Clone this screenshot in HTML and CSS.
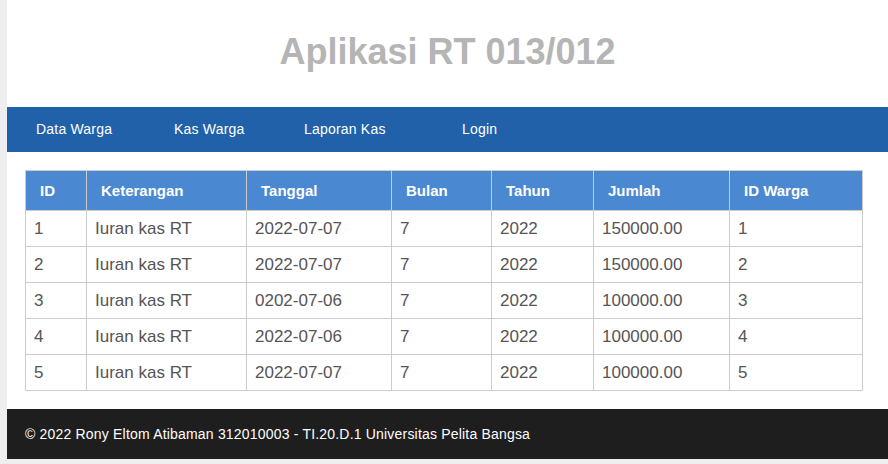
FILE: index.html
```html
<!DOCTYPE html>
<html lang="id">
<head>
<meta charset="utf-8">
<title>Aplikasi RT 013/012</title>
<link rel="stylesheet" href="styles.css">
</head>
<body>
<div class="page">
  <header class="site-header">
    <h1 class="site-title">Aplikasi RT 013/012</h1>
  </header>
  <nav class="main-nav">
    <ul class="nav-list">
      <li class="nav-item nav-data"><a href="#">Data Warga</a></li>
      <li class="nav-item nav-kas"><a href="#">Kas Warga</a></li>
      <li class="nav-item nav-laporan"><a href="#">Laporan Kas</a></li>
      <li class="nav-item nav-login"><a href="#">Login</a></li>
    </ul>
  </nav>
  <main class="content">
    <table class="kas-table">
      <colgroup>
        <col class="c-id">
        <col class="c-ket">
        <col class="c-tgl">
        <col class="c-bln">
        <col class="c-thn">
        <col class="c-jml">
        <col class="c-wrg">
      </colgroup>
      <thead>
        <tr><th>ID</th><th>Keterangan</th><th>Tanggal</th><th>Bulan</th><th>Tahun</th><th>Jumlah</th><th>ID Warga</th></tr>
      </thead>
      <tbody>
        <tr><td>1</td><td>Iuran kas RT</td><td>2022-07-07</td><td>7</td><td>2022</td><td>150000.00</td><td>1</td></tr>
        <tr><td>2</td><td>Iuran kas RT</td><td>2022-07-07</td><td>7</td><td>2022</td><td>150000.00</td><td>2</td></tr>
        <tr><td>3</td><td>Iuran kas RT</td><td>0202-07-06</td><td>7</td><td>2022</td><td>100000.00</td><td>3</td></tr>
        <tr><td>4</td><td>Iuran kas RT</td><td>2022-07-06</td><td>7</td><td>2022</td><td>100000.00</td><td>4</td></tr>
        <tr><td>5</td><td>Iuran kas RT</td><td>2022-07-07</td><td>7</td><td>2022</td><td>100000.00</td><td>5</td></tr>
      </tbody>
    </table>
  </main>
  <footer class="site-footer">
    <p class="footer-text">&copy; 2022 Rony Eltom Atibaman 312010003 - TI.20.D.1 Universitas Pelita Bangsa</p>
  </footer>
</div>
</body>
</html>
```

FILE: styles.css
```css
html, body {
  margin: 0;
  padding: 0;
}
body {
  background: #eeeeee;
  font-family: "Liberation Sans", Arial, sans-serif;
  overflow: hidden;
}
.page {
  margin-left: 7px;
  margin-bottom: 5px;
  background: #ffffff;
}
.site-header {
  height: 107px;
  box-sizing: border-box;
  padding-top: 31px;
  text-align: center;
}
.site-title {
  margin: 0;
  font-size: 36px;
  line-height: 41px;
  font-weight: bold;
  color: #b5b5b5;
}
.main-nav {
  background: #2161aa;
  height: 45px;
}
.nav-list {
  list-style: none;
  margin: 0;
  padding: 0 0 0 29px;
  display: flex;
}
.nav-item a {
  display: block;
  font-size: 14px;
  letter-spacing: 0.2px;
  line-height: 45px;
  color: #ffffff;
  text-decoration: none;
}
.nav-data { width: 138px; }
.nav-kas { width: 130px; }
.nav-laporan { width: 158px; }
.content {
  padding: 18px 18px 18px;
}
.kas-table {
  width: 837px;
  table-layout: fixed;
  border-collapse: collapse;
}
.c-id { width: 61px; }
.c-ket { width: 160px; }
.c-tgl { width: 145px; }
.c-bln { width: 100px; }
.c-thn { width: 102px; }
.c-jml { width: 136px; }
.c-wrg { width: 133px; }
.kas-table th,
.kas-table td {
  border: 1px solid #cccccc;
  text-align: left;
  white-space: nowrap;
}
.kas-table th {
  background: #4a89d2;
  color: #ffffff;
  font-size: 15px;
  font-weight: bold;
  line-height: 17px;
  padding: 11px 14px;
}
.kas-table td {
  color: #555555;
  font-size: 17px;
  line-height: 19px;
  padding: 8px 8px;
}
.site-footer {
  background: #1e1e1e;
  height: 50px;
  padding-left: 18px;
}
.footer-text {
  margin: 0;
  font-size: 14px;
  letter-spacing: 0.19px;
  line-height: 50px;
  color: #ffffff;
}
```
